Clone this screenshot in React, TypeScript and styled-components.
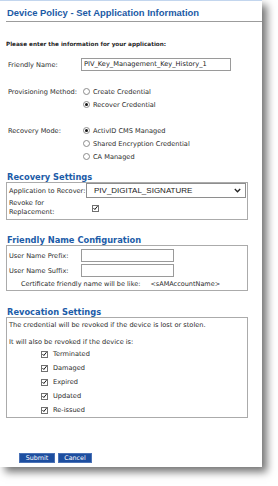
import React from "react";
import styled, { createGlobalStyle } from "styled-components";

const GlobalStyle = createGlobalStyle`
  html, body { margin: 0; padding: 0; background: #ffffff; }
  body { font-family: "DejaVu Sans", Verdana, sans-serif; color: #2b2b2b; }
  * { box-sizing: border-box; }
`;

const Page = styled.div`
  width: 278px;
  height: 486px;
  background: #ffffff;
  overflow: hidden;
`;

const Panel = styled.div`
  width: 262px;
  height: 467px;
  background: #ffffff;
  border-top: 1px solid #c3d6ee;
  box-shadow: 5px 5px 8px rgba(0, 0, 0, 0.55);
  display: flex;
  flex-direction: column;
`;

const TitleBar = styled.div`
  margin-left: 6px;
  height: 21px;
  padding: 3px 0 0 1px;
  border-bottom: 1px solid #9c9c9c;
  display: flex;
  align-items: center;
`;

const Title = styled.h1`
  margin: 0;
  font-family: "Liberation Sans", Arial, sans-serif;
  font-weight: bold;
  font-size: 9.45px;
  color: #1b5aa5;
  white-space: nowrap;
`;

const Body = styled.div`
  padding: 0 0 0 6px;
  display: flex;
  flex-direction: column;
`;

const Intro = styled.p`
  margin: 17px 0 0;
  height: 10px;
  line-height: 10px;
  font-size: 5.7px;
  font-weight: bold;
  color: #1e1e1e;
  white-space: nowrap;
`;

const FieldRow = styled.div<{ $top: number }>`
  display: flex;
  align-items: center;
  height: 13px;
  margin-top: ${(p) => p.$top}px;
  font-size: 6.6px;
  white-space: nowrap;
`;

const Label = styled.span<{ $w: number; $pad?: number }>`
  width: ${(p) => p.$w}px;
  padding-left: ${(p) => p.$pad ?? 2}px;
  flex-shrink: 0;
  font-size: 6.6px;
  white-space: nowrap;
`;

const TextBox = styled.input<{ $w: number }>`
  width: ${(p) => p.$w}px;
  height: 13px;
  margin: 0;
  padding: 0 0 1px 2px;
  border: 1px solid #9a9a9a;
  border-radius: 0;
  background: #ffffff;
  font-family: "DejaVu Sans", Verdana, sans-serif;
  font-size: 6.65px;
  line-height: 10px;
  color: #222;
  outline: none;
`;

const RadioOption = styled.label`
  display: flex;
  align-items: center;
  gap: 3px;
  margin-left: 2px;
  font-size: 6.6px;
`;

const RadioDot = styled.span<{ $on?: boolean }>`
  position: relative;
  width: 7px;
  height: 7px;
  border-radius: 50%;
  border: 1px solid #8c8c8c;
  background: #fff;
  flex-shrink: 0;
  &::after {
    content: "";
    display: ${(p) => (p.$on ? "block" : "none")};
    position: absolute;
    left: 1px;
    top: 1px;
    width: 3px;
    height: 3px;
    border-radius: 50%;
    background: #111;
  }
`;

const SectionTitle = styled.h2<{ $top: number }>`
  margin: ${(p) => p.$top}px 0 0 1px;
  height: 9px;
  line-height: 9px;
  font-size: 8.3px;
  font-weight: bold;
  color: #1c5ca8;
  white-space: nowrap;
`;

const SectionBox = styled.div<{ $pt?: number; $pb?: number }>`
  width: 242px;
  border: 1px solid #ababab;
  padding: ${(p) => p.$pt ?? 0}px 0 ${(p) => p.$pb ?? 0}px 0;
  display: flex;
  flex-direction: column;
`;

const BoxRow = styled.div<{ $h: number; $top?: number }>`
  display: flex;
  align-items: center;
  height: ${(p) => p.$h}px;
  margin-top: ${(p) => p.$top ?? 0}px;
  padding-left: 2px;
  font-size: 6.6px;
  white-space: nowrap;
`;

const TwoLineLabel = styled.span`
  width: 77px;
  line-height: 9px;
  font-size: 6.6px;
  white-space: normal;
`;

const Select = styled.div`
  width: 160px;
  height: 15px;
  border: 1px solid #8e8e8e;
  display: flex;
  align-items: center;
  justify-content: space-between;
  padding: 0 4px 0 7px;
  font-family: "Liberation Sans", Arial, sans-serif;
  font-size: 8px;
  color: #222;
`;

const CheckBox = styled.span<{ $ml?: number }>`
  width: 7px;
  height: 7px;
  border: 1px solid #707070;
  background: #fff;
  margin-left: ${(p) => p.$ml ?? 0}px;
  display: flex;
  align-items: center;
  justify-content: center;
  flex-shrink: 0;
`;

const Note = styled.div`
  display: flex;
  align-items: center;
  height: 9px;
  margin-top: 2px;
  padding-left: 14px;
  font-size: 6.5px;
  white-space: nowrap;
`;

const NoteValue = styled.span`
  margin-left: 10px;
`;

const Para = styled.p<{ $top?: number }>`
  margin: ${(p) => p.$top ?? 0}px 0 0;
  padding-left: 2px;
  height: 9px;
  line-height: 9px;
  font-size: 6.6px;
  white-space: nowrap;
`;

const CheckRow = styled.label`
  display: flex;
  align-items: center;
  gap: 5px;
  height: 14px;
  padding-left: 34px;
  font-size: 6.6px;
`;

const ButtonBar = styled.div`
  display: flex;
  gap: 3px;
  margin-top: 35px;
  padding-left: 19px;
`;

const Button = styled.button<{ $w: number }>`
  width: ${(p) => p.$w}px;
  height: 10px;
  margin: 0;
  padding: 0;
  border: 1px solid #4b72b6;
  border-radius: 0;
  background: #1d4e9f;
  color: #ffffff;
  font-family: "DejaVu Sans", Verdana, sans-serif;
  font-size: 6.4px;
  line-height: 8px;
`;

const Check = () => (
  <svg width="6" height="6" viewBox="0 0 6 6">
    <path d="M0.6 3.1 L2.2 4.8 L5.4 0.8" fill="none" stroke="#111" strokeWidth="1.2" />
  </svg>
);

const Chevron = () => (
  <svg width="7" height="5" viewBox="0 0 7 5">
    <path d="M0.8 1 L3.5 3.8 L6.2 1" fill="none" stroke="#222" strokeWidth="1.3" />
  </svg>
);

const revokeReasons = ["Terminated", "Damaged", "Expired", "Updated", "Re-issued"];

export default function App() {
  return (
    <Page>
      <GlobalStyle />
      <Panel>
        <TitleBar>
          <Title>Device Policy - Set Application Information</Title>
        </TitleBar>
        <Body>
          <Intro>Please enter the information for your application:</Intro>
          <FieldRow $top={9}>
            <Label $w={75}>Friendly Name:</Label>
            <TextBox $w={150} readOnly value="PIV_Key_Management_Key_History_1" />
          </FieldRow>
          <FieldRow $top={14}>
            <Label $w={75}>Provisioning Method:</Label>
            <RadioOption>
              <RadioDot />
              Create Credential
            </RadioOption>
          </FieldRow>
          <FieldRow $top={0}>
            <Label $w={75} />
            <RadioOption>
              <RadioDot $on />
              Recover Credential
            </RadioOption>
          </FieldRow>
          <FieldRow $top={13}>
            <Label $w={75}>Recovery Mode:</Label>
            <RadioOption>
              <RadioDot $on />
              ActivID CMS Managed
            </RadioOption>
          </FieldRow>
          <FieldRow $top={0}>
            <Label $w={75} />
            <RadioOption>
              <RadioDot />
              Shared Encryption Credential
            </RadioOption>
          </FieldRow>
          <FieldRow $top={0}>
            <Label $w={75} />
            <RadioOption>
              <RadioDot />
              CA Managed
            </RadioOption>
          </FieldRow>

          <SectionTitle $top={10}>Recovery Settings</SectionTitle>
          <SectionBox $pb={2}>
            <BoxRow $h={15}>
              <Label $w={77} $pad={0}>Application to Recover:</Label>
              <Select>
                <span>PIV_DIGITAL_SIGNATURE</span>
                <Chevron />
              </Select>
            </BoxRow>
            <BoxRow $h={18} $top={1}>
              <TwoLineLabel>
                Revoke for
                <br />
                Replacement:
              </TwoLineLabel>
              <CheckBox $ml={6}>
                <Check />
              </CheckBox>
            </BoxRow>
          </SectionBox>

          <SectionTitle $top={16}>Friendly Name Configuration</SectionTitle>
          <SectionBox $pt={3} $pb={2}>
            <BoxRow $h={13}>
              <Label $w={72} $pad={0}>User Name Prefix:</Label>
              <TextBox $w={93} readOnly value="" />
            </BoxRow>
            <BoxRow $h={13} $top={2}>
              <Label $w={72} $pad={0}>User Name Suffix:</Label>
              <TextBox $w={93} readOnly value="" />
            </BoxRow>
            <Note>
              Certificate friendly name will be like:
              <NoteValue>&lt;sAMAccountName&gt;</NoteValue>
            </Note>
          </SectionBox>

          <SectionTitle $top={17}>Revocation Settings</SectionTitle>
          <SectionBox $pt={3}>
            <Para>The credential will be revoked if the device is lost or stolen.</Para>
            <Para $top={8}>It will also be revoked if the device is:</Para>
            {revokeReasons.map((r) => (
              <CheckRow key={r}>
                <CheckBox>
                  <Check />
                </CheckBox>
                {r}
              </CheckRow>
            ))}
          </SectionBox>
        </Body>
        <ButtonBar>
          <Button $w={36}>Submit</Button>
          <Button $w={34}>Cancel</Button>
        </ButtonBar>
      </Panel>
    </Page>
  );
}
